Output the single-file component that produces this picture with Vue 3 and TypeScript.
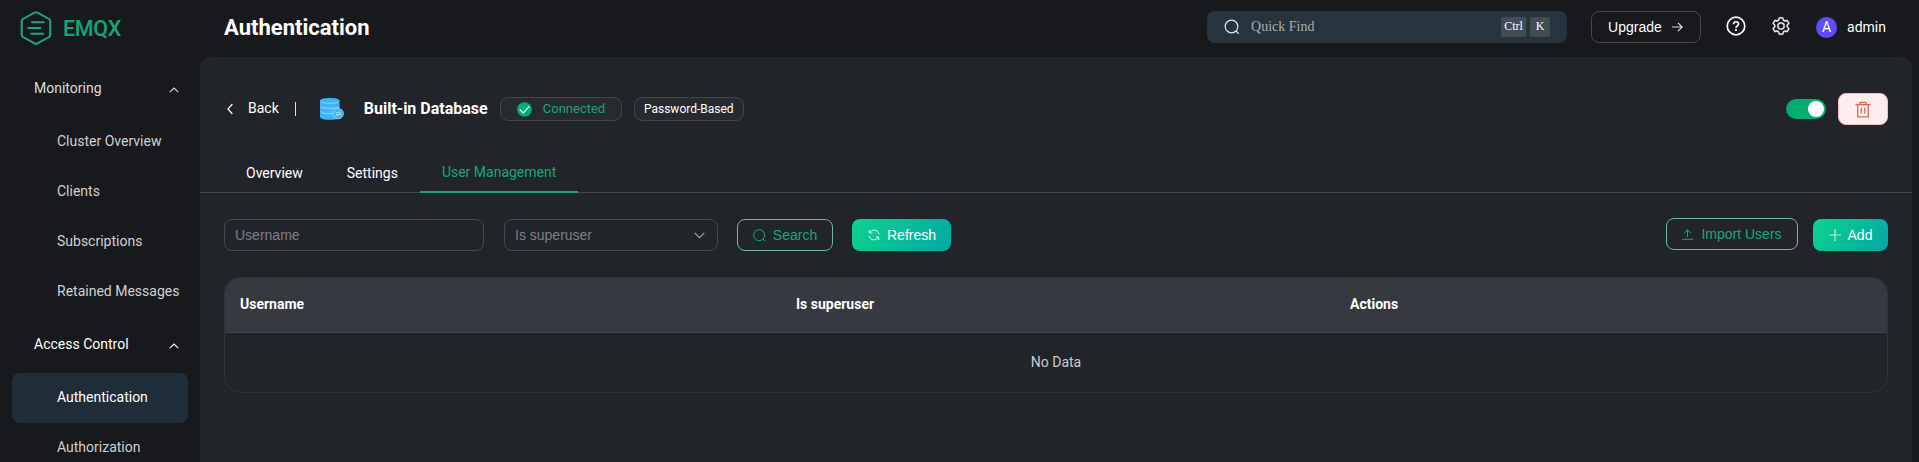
<script setup lang="ts">
interface MenuItem { label: string; active?: boolean }
interface MenuGroup { label: string; open?: boolean; items: MenuItem[] }

const groups: MenuGroup[] = [
  {
    label: 'Monitoring',
    items: [
      { label: 'Cluster Overview' },
      { label: 'Clients' },
      { label: 'Subscriptions' },
      { label: 'Retained Messages' },
    ],
  },
  {
    label: 'Access Control',
    open: true,
    items: [{ label: 'Authentication', active: true }, { label: 'Authorization' }],
  },
]
const tabs: MenuItem[] = [
  { label: 'Overview' },
  { label: 'Settings' },
  { label: 'User Management', active: true },
]
const columns: string[] = ['Username', 'Is superuser', 'Actions']
</script>

<template>
  <div class="app">
    <aside class="sidebar">
      <div class="logo">
        <svg class="logo-mark" width="32" height="36" viewBox="0 0 32 36" fill="none" stroke="#19ab78" stroke-width="2" stroke-linecap="round" stroke-linejoin="round">
          <path d="M14.5 2.6Q16 1.7 17.5 2.6L29 9Q30.3 9.8 30.3 11.4V24.6Q30.3 26.2 29 27L17.5 33.4Q16 34.3 14.5 33.4L3 27Q1.700 26.200 1.700 24.600V11.400Q1.700 9.800 3 9Z" />
          <path d="M12 12.200H23.800M8.200 18H20.400M11.200 23.700H23.200" />
        </svg>
        <span class="logo-text">EMQX</span>
      </div>
      <nav class="menu">
        <div v-for="g in groups" :key="g.label">
          <div class="group" :class="{ open: g.open }">
            <span>{{ g.label }}</span>
            <svg width="10" height="6" viewBox="0 0 10 6" fill="none" stroke="currentColor" stroke-width="1.1"><path d="M.8 5.200 5 1l4.200 4.200" /></svg>
          </div>
          <div v-for="i in g.items" :key="i.label" class="item" :class="{ active: i.active }">{{ i.label }}</div>
        </div>
      </nav>
    </aside>

    <div class="main">
      <header class="header">
        <h1>Authentication</h1>
        <div class="find">
          <svg width="16" height="16" viewBox="0 0 16 16" fill="none" stroke="#e4e8ea" stroke-width="1.2"><circle cx="7.500" cy="7.500" r="6.300" /><path d="m12 12 2.800 2.800" /></svg>
          <span class="find-text">Quick Find</span>
          <kbd class="ctrl">Ctrl</kbd><kbd class="k">K</kbd>
        </div>
        <div class="upgrade">
          <span>Upgrade</span>
          <svg width="11" height="10" viewBox="0 0 11 10" fill="none" stroke="#e0e0e0" stroke-width="1.200"><path d="M0 5h10M6 .8 10.200 5 6 9.200" /></svg>
        </div>
        <svg class="help" width="20" height="20" viewBox="0 0 20 20" fill="none" stroke="#fff" stroke-width="1.700">
          <circle cx="10" cy="10" r="8.800" />
          <path d="M7.500 8.300C7.500 4.900 12.600 5 12.600 8C12.600 9.700 10 9.900 10 12" /><path d="M10 13.100v1.900" />
        </svg>
        <svg class="gear" width="20" height="20" viewBox="0 0 1024 1024" fill="#f2f2f2">
          <path d="M600.704 64a32 32 0 0 1 30.464 22.208l35.200 109.376c14.784 7.232 28.928 15.360 42.432 24.512l112.384-24.192a32 32 0 0 1 34.432 15.360L944.320 364.800a32 32 0 0 1-4.032 37.504l-77.120 85.120a357.120 357.120 0 0 1 0 49.024l77.120 85.248a32 32 0 0 1 4.032 37.504l-88.704 153.600a32 32 0 0 1-34.432 15.296L708.800 803.904c-13.440 9.088-27.648 17.280-42.368 24.512l-35.264 109.376A32 32 0 0 1 600.704 960H423.296a32 32 0 0 1-30.464-22.208L357.696 828.480a351.616 351.616 0 0 1-42.560-24.640l-112.320 24.256a32 32 0 0 1-34.432-15.360L79.680 659.200a32 32 0 0 1 4.032-37.504l77.120-85.248a357.120 357.120 0 0 1 0-48.896l-77.120-85.248A32 32 0 0 1 79.680 364.800l88.704-153.600a32 32 0 0 1 34.432-15.296l112.320 24.256c13.568-9.152 27.776-17.408 42.560-24.640l35.200-109.312A32 32 0 0 1 423.232 64H600.640zm-23.424 64H446.720l-36.352 113.088-24.512 11.968a294.113 294.113 0 0 0-34.816 20.096l-22.656 15.360-116.224-25.088-65.280 113.152 79.680 88.192-1.920 27.136a293.120 293.120 0 0 0 0 40.192l1.920 27.136-79.808 88.192 65.344 113.152 116.224-25.024 22.656 15.296a294.113 294.113 0 0 0 34.816 20.096l24.512 11.968L446.720 896h130.688l36.480-113.152 24.448-11.904a288.282 288.282 0 0 0 34.752-20.096l22.592-15.296 116.288 25.024 65.280-113.152-79.744-88.192 1.920-27.136a293.120 293.120 0 0 0 0-40.256l-1.920-27.136 79.808-88.128-65.344-113.152-116.288 24.960-22.592-15.232a287.616 287.616 0 0 0-34.752-20.096l-24.448-11.904L577.344 128zM512 320a192 192 0 1 1 0 384 192 192 0 0 1 0-384zm0 64a128 128 0 1 0 0 256 128 128 0 0 0 0-256z" stroke="#f2f2f2" stroke-width="14" />
        </svg>
        <span class="avatar">A</span>
        <span class="user">admin</span>
      </header>

      <main class="panel">
        <div class="detail">
          <svg class="back-icon" width="6" height="12" viewBox="0 0 6 12" fill="none" stroke="#fff" stroke-width="1.200"><path d="M5.400 1 1 6l4.400 5" /></svg>
          <span class="back">Back</span>
          <span class="sep"></span>
          <svg class="db" width="24" height="24" viewBox="0 0 24 24">
            <path d="M0 3.500C0 .2 19.500.2 19.500 3.500V20C19.500 23.800 0 23.800 0 20Z" fill="#3db5f7" />
            <g fill="none" stroke="#a5dcfb" stroke-width=".8"><path d="M.4 4.200C1.500 7 18 7 19.100 4.200M.2 9.200C1.500 12.200 18 12.200 19.300 9.200M.2 14.400C1.500 17.400 18 17.400 19.300 14.400" /></g>
            <circle cx="18.200" cy="16.600" r="5.200" fill="#3db5f7" stroke="#a5dcfb" stroke-width=".8" />
            <path d="M15.500 15.800h5l-1.300-1.200M21 17.600h-5l1.300 1.200" stroke="#c9eafd" stroke-width=".8" fill="none" />
          </svg>
          <span class="name">Built-in Database</span>
          <span class="tag connected">
            <svg width="15" height="15" viewBox="0 0 15 15"><circle cx="7.500" cy="7.500" r="7.300" fill="#06ad72" /><path d="m2.800 7.500 3.500 3.400 6-6.500" fill="none" stroke="#e9fff6" stroke-width="1.200" /></svg>
            <span>Connected</span>
          </span>
          <span class="tag type">Password-Based</span>
          <span class="switch"><i></i></span>
          <span class="delete">
            <svg width="16" height="17" viewBox="0 0 16 17" fill="none" stroke="#dd6556" stroke-width="1.300"><path d="M.5 3.600h15M5 3.400V1.300h6v2.100M2.700 3.600v12.300h10.600V3.600M6.200 6.800v5.700M9.800 6.800v5.700" /></svg>
          </span>
        </div>

        <div class="tabs">
          <div v-for="t in tabs" :key="t.label" class="tab" :class="{ active: t.active }"><span>{{ t.label }}</span></div>
        </div>

        <div class="filters">
          <div class="field username">Username</div>
          <div class="field select">
            <span>Is superuser</span>
            <svg width="11" height="7" viewBox="0 0 11 7" fill="none" stroke="#a4a6a9" stroke-width="1.200"><path d="m.7.800 4.800 4.800L10.300.8" /></svg>
          </div>
          <div class="btn outline search">
            <svg width="13" height="13" viewBox="0 0 13 13" fill="none" stroke="currentColor" stroke-width="1"><circle cx="6.200" cy="6.200" r="5.500" /><path d="m10 10 2.400 2.400" /></svg>
            <span>Search</span>
          </div>
          <div class="btn solid refresh">
            <svg width="12" height="12" viewBox="0 0 12 12" fill="none" stroke="#e2fbf3" stroke-width="1"><path d="M1.300 1v3h3M1.500 4C3.200.2 9.800-.2 11 5.300M10.700 11V8h-3M10.500 8C8.800 11.800 2.200 12.200 1 6.700" /></svg>
            <span>Refresh</span>
          </div>
          <div class="btn outline import">
            <svg width="11" height="12" viewBox="0 0 11 12" fill="none" stroke="currentColor" stroke-width="1"><path d="M0 11.300h11M5.500 9V1.700M2 5.200l3.500-3.500L9 5.200" /></svg>
            <span>Import Users</span>
          </div>
          <div class="btn solid add">
            <svg width="12" height="12" viewBox="0 0 12 12" fill="none" stroke="#b9f3df" stroke-width="1.200"><path d="M0 6h12M6 0v12" /></svg>
            <span>Add</span>
          </div>
        </div>

        <section class="table">
          <div class="thead"><span v-for="c in columns" :key="c">{{ c }}</span></div>
          <div class="empty">No Data</div>
        </section>
      </main>
    </div>
  </div>
</template>

<style>
html, body { margin: 0; overflow: hidden; background: #18191c; }
</style>

<style scoped>
* { box-sizing: border-box; }
svg { display: block; flex: none; }
.app { display: flex; width: 1919px; height: 462px; overflow: hidden; background: #18191c; font: 14px/20px Roboto, sans-serif; color: #fff; }
.sidebar { width: 200px; flex: none; }
.logo { height: 61px; padding: 10px 0 0 20px; display: flex; align-items: flex-start; }
.logo-mark { margin-top: -0.500px; }
.logo-text { margin: 7px 0 0 11px; font-size: 21.500px; line-height: 24px; font-weight: 500; letter-spacing: -0.350px; color: #12a876; }
.group { height: 56px; padding: 0 21px 2px 34px; display: flex; align-items: center; justify-content: space-between; color: #dcdcdd; }
.group svg { margin-top: 4px; }
.group.open { color: #fff; }
.item { height: 50px; line-height: 49px; margin: 0 12px; padding-left: 45px; color: #cfd0d1; border-radius: 8px; white-space: nowrap; }
.item.active { background: #1f2d39; color: #fff; }
.main { flex: 1; }
.header { height: 57px; padding-left: 24px; display: flex; align-items: flex-start; }
h1 { margin: 14px auto 0 0; font-size: 22px; line-height: 28px; font-weight: 700; }
.find { margin-top: 11px; width: 360px; height: 32px; padding: 0 17px 0 17px; display: flex; align-items: center; border-radius: 8px; background: #27343d; font-family: "Liberation Serif", serif; color: #a8aeb2; }
.find-text { margin: 0 auto 0 11px; }
kbd { height: 20px; text-align: center; font: 12px/19px "Liberation Serif", serif; color: #fff; background: #434c54; border-radius: 2px; }
.ctrl { width: 25px; margin-right: 4px; }
.k { width: 20px; }
.upgrade { margin: 11px 0 0 24px; width: 110px; height: 32px; border: 1px solid #45474a; border-radius: 8px; padding: 0 17px 0 16px; display: flex; align-items: center; justify-content: space-between; font-family: "Liberation Sans", sans-serif; }
.help { margin: 16px 0 0 25px; }
.gear { margin: 16px 0 0 25px; }
.avatar { margin: 17px 0 0 25px; width: 21px; height: 21px; border-radius: 50%; background: #5f4cf8; text-align: center; line-height: 21px; }
.user { margin: 17px 33px 0 10px; }
.panel { margin-right: 7px; height: 405px; background: #212429; border-radius: 10px 10px 0 0; }
.detail { height: 104px; padding: 0 24px 0 27px; display: flex; align-items: center; }
.back { margin: -2px 0 0 15px; }
.sep { width: 1px; height: 14px; margin: 0 24px 0 16px; background: #e0e0e0; }
.name { margin: -1px 0 0 20px; width: 136px; font-size: 16px; font-weight: 700; white-space: nowrap; }
.tag { height: 24px; border: 1px solid #41454c; border-radius: 8px; background: #272a2f; display: flex; align-items: center; font-size: 12px; }
.connected { width: 122px; padding-left: 16px; gap: 11px; color: #18a673; font-size: 13px; }
.type { margin: 0 auto 0 12px; width: 110px; justify-content: center; }
.switch { width: 40px; height: 20px; padding: 2px; border-radius: 10px; background: #05ad71; display: flex; justify-content: flex-end; }
.switch i { width: 16px; height: 16px; border-radius: 50%; background: #fff; }
.delete { margin-left: 12px; width: 50px; height: 32px; border-radius: 8px; border: 1px solid #f5bfbf; background: #fdeeee; display: flex; align-items: center; justify-content: center; }
.tabs { height: 32px; padding-left: 24px; display: flex; border-bottom: 1px solid #43474b; }
.tab { height: 32px; padding: 2px 22px 0; }
.tab.active { padding-top: 1px; color: #1aa775; border-bottom: 2px solid #28a07a; }
.filters { padding: 26px 24px 0; display: flex; font: 14px/20px "Liberation Sans", sans-serif; }
.field { height: 32px; padding: 0 10px; border: 1px solid #45484c; border-radius: 8px; display: flex; align-items: center; color: #7d8085; }
.username { width: 260px; }
.select { width: 214px; margin-left: 20px; padding-right: 12px; justify-content: space-between; }
.btn { height: 32px; border-radius: 8px; display: flex; align-items: center; justify-content: center; gap: 7px; white-space: nowrap; }
.outline { border: 1px solid #73b59e; color: #18a974; }
.solid { background: linear-gradient(126deg, #0bd28d 5%, #04a9a4 95%); color: #fff; }
.search { width: 96px; margin-left: 19px; }
.refresh { width: 99px; margin-left: 19px; padding-left: 1px; }
.import { width: 132px; margin: -1px 15px 0 auto; gap: 8px; }
.add { width: 75px; }
.table { margin: 26px 24px 0; height: 116px; border: 1px solid #303338; border-radius: 16px; overflow: hidden; }
.thead { height: 55px; display: grid; grid-template-columns: 556px 554px 1fr; align-items: center; background: #363940; border-bottom: 1px solid #43464b; font-weight: 700; }
.thead span { padding: 0 0 2px 15px; }
.empty { line-height: 58px; text-align: center; color: #c8c9ca; }
</style>
